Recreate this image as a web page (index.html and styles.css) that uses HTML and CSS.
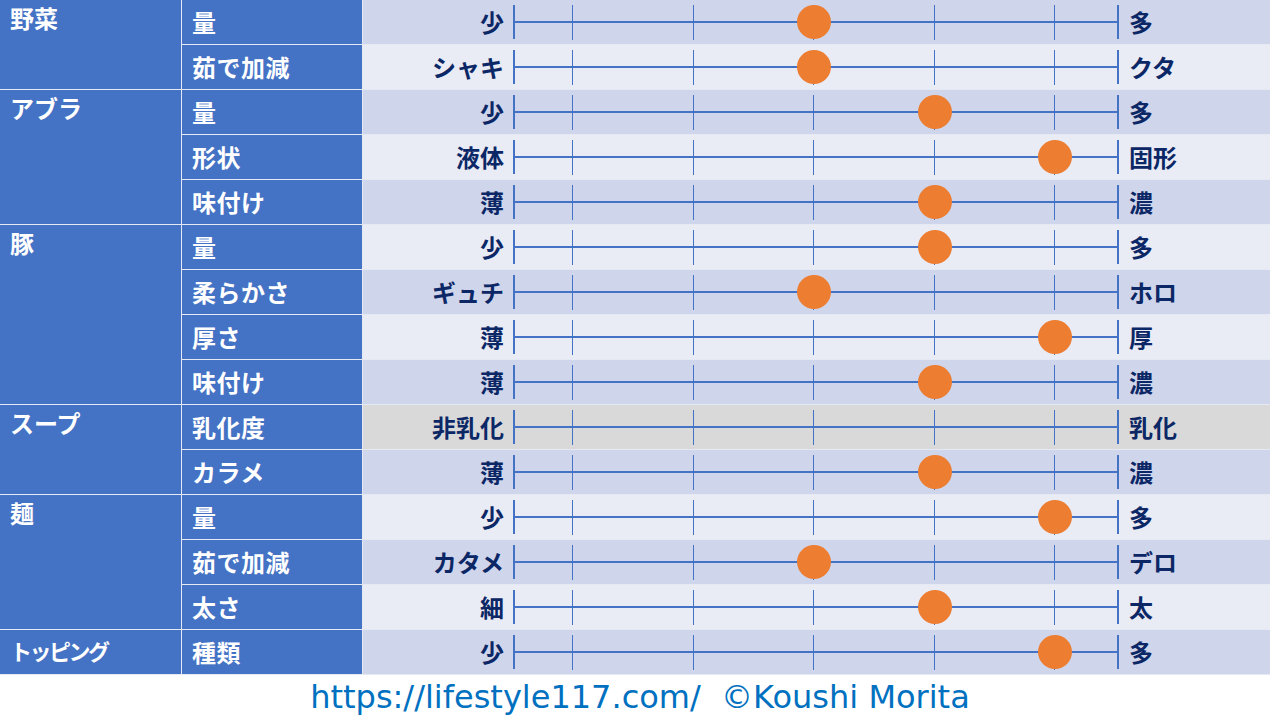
FILE: index.html
```html
<!DOCTYPE html>
<html lang="ja">
<head>
<meta charset="utf-8">
<title>ラーメン評価</title>
<link rel="stylesheet" href="styles.css">
</head>
<body>
<div class="sheet">
  <div class="cat" style="grid-row: span 2">野菜</div>
  <div class="item">量</div>
  <div class="scale dark"><span class="lo">少</span><div class="track"><i class="t1"></i><i class="t2"></i><i class="t3"></i><i class="t4"></i><i class="t5"></i><b class="dot t3"></b></div><span class="hi">多</span></div>
  <div class="item">茹で加減</div>
  <div class="scale light"><span class="lo">シャキ</span><div class="track"><i class="t1"></i><i class="t2"></i><i class="t3"></i><i class="t4"></i><i class="t5"></i><b class="dot t3"></b></div><span class="hi">クタ</span></div>

  <div class="cat" style="grid-row: span 3">アブラ</div>
  <div class="item">量</div>
  <div class="scale dark"><span class="lo">少</span><div class="track"><i class="t1"></i><i class="t2"></i><i class="t3"></i><i class="t4"></i><i class="t5"></i><b class="dot t4"></b></div><span class="hi">多</span></div>
  <div class="item">形状</div>
  <div class="scale light"><span class="lo">液体</span><div class="track"><i class="t1"></i><i class="t2"></i><i class="t3"></i><i class="t4"></i><i class="t5"></i><b class="dot t5"></b></div><span class="hi">固形</span></div>
  <div class="item">味付け</div>
  <div class="scale dark"><span class="lo">薄</span><div class="track"><i class="t1"></i><i class="t2"></i><i class="t3"></i><i class="t4"></i><i class="t5"></i><b class="dot t4"></b></div><span class="hi">濃</span></div>

  <div class="cat" style="grid-row: span 4">豚</div>
  <div class="item">量</div>
  <div class="scale light"><span class="lo">少</span><div class="track"><i class="t1"></i><i class="t2"></i><i class="t3"></i><i class="t4"></i><i class="t5"></i><b class="dot t4"></b></div><span class="hi">多</span></div>
  <div class="item">柔らかさ</div>
  <div class="scale dark"><span class="lo">ギュチ</span><div class="track"><i class="t1"></i><i class="t2"></i><i class="t3"></i><i class="t4"></i><i class="t5"></i><b class="dot t3"></b></div><span class="hi">ホロ</span></div>
  <div class="item">厚さ</div>
  <div class="scale light"><span class="lo">薄</span><div class="track"><i class="t1"></i><i class="t2"></i><i class="t3"></i><i class="t4"></i><i class="t5"></i><b class="dot t5"></b></div><span class="hi">厚</span></div>
  <div class="item">味付け</div>
  <div class="scale dark"><span class="lo">薄</span><div class="track"><i class="t1"></i><i class="t2"></i><i class="t3"></i><i class="t4"></i><i class="t5"></i><b class="dot t4"></b></div><span class="hi">濃</span></div>

  <div class="cat" style="grid-row: span 2">スープ</div>
  <div class="item">乳化度</div>
  <div class="scale gray"><span class="lo">非乳化</span><div class="track"><i class="t1"></i><i class="t2"></i><i class="t3"></i><i class="t4"></i><i class="t5"></i></div><span class="hi">乳化</span></div>
  <div class="item">カラメ</div>
  <div class="scale dark"><span class="lo">薄</span><div class="track"><i class="t1"></i><i class="t2"></i><i class="t3"></i><i class="t4"></i><i class="t5"></i><b class="dot t4"></b></div><span class="hi">濃</span></div>

  <div class="cat" style="grid-row: span 3">麺</div>
  <div class="item">量</div>
  <div class="scale light"><span class="lo">少</span><div class="track"><i class="t1"></i><i class="t2"></i><i class="t3"></i><i class="t4"></i><i class="t5"></i><b class="dot t5"></b></div><span class="hi">多</span></div>
  <div class="item">茹で加減</div>
  <div class="scale dark"><span class="lo">カタメ</span><div class="track"><i class="t1"></i><i class="t2"></i><i class="t3"></i><i class="t4"></i><i class="t5"></i><b class="dot t3"></b></div><span class="hi">デロ</span></div>
  <div class="item">太さ</div>
  <div class="scale light"><span class="lo">細</span><div class="track"><i class="t1"></i><i class="t2"></i><i class="t3"></i><i class="t4"></i><i class="t5"></i><b class="dot t4"></b></div><span class="hi">太</span></div>

  <div class="cat small">トッピング</div>
  <div class="item">種類</div>
  <div class="scale dark"><span class="lo">少</span><div class="track"><i class="t1"></i><i class="t2"></i><i class="t3"></i><i class="t4"></i><i class="t5"></i><b class="dot t5"></b></div><span class="hi">多</span></div>
</div>
<p class="credit">https://lifestyle117.com/&nbsp;&nbsp;©Koushi Morita</p>
</body>
</html>
```

FILE: styles.css
```css
html, body {
  margin: 0;
  padding: 0;
  background: #ffffff;
}

body {
  width: 1280px;
  height: 720px;
  overflow: hidden;
  font-family: "Noto Sans CJK JP", "Noto Sans", sans-serif;
}

.sheet {
  display: grid;
  grid-template-columns: 181px 180px 907px;
  grid-auto-rows: 44px;
  gap: 1px;
  background: #e4e9f4;
  width: 1270px;
  padding-bottom: 1px;
}

.cat {
  background: #4472c4;
  color: #ffffff;
  font-weight: 700;
  font-size: 24px;
  line-height: 1;
  padding: 6px 0 0 10px;
}

.cat.small {
  font-size: 22px;
  letter-spacing: -2.5px;
  padding-top: 9px;
}

.item {
  background: #4472c4;
  color: #ffffff;
  font-weight: 700;
  font-size: 24px;
  line-height: 1;
  display: flex;
  align-items: center;
  padding-left: 10px;
  letter-spacing: 0.5px;
}

.scale {
  display: grid;
  grid-template-columns: 150px 606px 1fr;
  align-items: stretch;
  color: #0b2766;
  font-weight: 700;
  font-size: 24px;
  line-height: 1;
}

.scale.dark { background: #cfd5ea; }
.scale.light { background: #e9ebf5; }
.scale.gray { background: #d9d9d9; }

.lo {
  display: flex;
  align-items: center;
  justify-content: flex-end;
  padding-right: 9px;
}

.hi {
  display: flex;
  align-items: center;
  padding-left: 10px;
}

.track {
  position: relative;
}

.track::before {
  content: "";
  position: absolute;
  left: 0;
  right: 0;
  top: 21px;
  height: 2px;
  background: #4472c4;
}

.track::after {
  content: "";
  position: absolute;
  left: 0;
  right: 0;
  top: 5px;
  bottom: 5px;
  border-left: 2px solid #4472c4;
  border-right: 2px solid #4472c4;
}

.track i {
  position: absolute;
  top: 5px;
  bottom: 4px;
  width: 1px;
  background: #4472c4;
}

.t1 { left: 59px; }
.t2 { left: 180px; }
.t3 { left: 300px; }
.t4 { left: 421px; }
.t5 { left: 541px; }

.track .dot {
  position: absolute;
  top: 5px;
  width: 34px;
  height: 34px;
  margin-left: -16px;
  border-radius: 50%;
  background: #ed7d31;
  z-index: 1;
}

.credit {
  margin: 0;
  text-align: center;
  color: #0070c0;
  font-family: "DejaVu Sans", Verdana, sans-serif;
  font-size: 32px;
  line-height: 44px;
}
```
